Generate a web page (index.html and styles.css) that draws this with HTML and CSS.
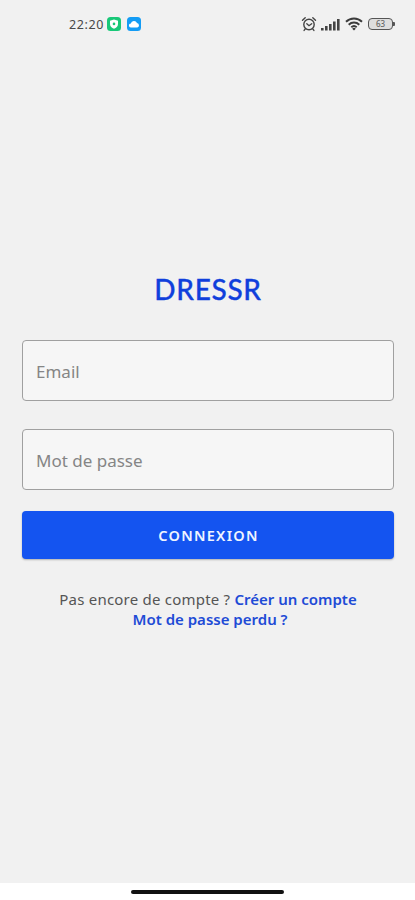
FILE: index.html
```html
<!DOCTYPE html>
<html lang="fr">
<head>
<meta charset="utf-8">
<title>Dressr</title>
<link rel="stylesheet" href="styles.css">
</head>
<body>
<div class="screen">
  <header class="status">
    <div class="status-left">
      <span class="time">22:20</span>
      <svg class="app" viewBox="0 0 14 14"><rect width="14" height="14" rx="3.5" fill="#18c878"/><path d="M7 2.500l4 1.200v3.300C11 9.500 9.200 11 7 11.800 4.800 11 3 9.500 3 7V3.700z" fill="#fff"/><circle cx="7" cy="6.900" r="1.300" fill="#18c878"/></svg>
      <svg class="app" viewBox="0 0 14 14"><rect width="14" height="14" rx="3.5" fill="#139cf5"/><path d="M4 10.500a2 2 0 0 1-.2-4 3.300 3.300 0 0 1 6.200-.5 2.300 2.300 0 0 1 .3 4.500z" fill="#fff"/></svg>
    </div>
    <div class="status-right">
      <svg class="alarm" viewBox="0 0 16 16" fill="none" stroke="#444" stroke-width="1.400" stroke-linecap="round"><circle cx="8" cy="8.500" r="5.200"/><path d="M1.500 4.300l2.700-2.500M14.500 4.300l-2.700-2.500M5.800 7.800L8 9.700l2.700-2M4.300 12.900l-1.200 1.500M11.700 12.900l1.200 1.500"/></svg>
      <svg class="signal" viewBox="0 0 19 13" fill="#444"><rect x="0" y="10" width="2.600" height="2.500"/><rect x="4" y="8" width="2.600" height="4.500"/><rect x="8" y="6" width="2.600" height="6.500"/><rect x="12" y="3.500" width="2.600" height="9"/><rect x="16" y="1" width="2.600" height="11.500"/></svg>
      <svg class="wifi" viewBox="0 0 18 14" fill="none" stroke="#3c3c3c" stroke-width="1.900"><path d="M1 4.800a11.500 11.500 0 0 1 16 0M3.700 7.700a7.600 7.600 0 0 1 10.600 0M6.300 10.300a4 4 0 0 1 5.400 0"/><path d="M7.200 11.700L9 13.600l1.800-1.900a2.600 2.600 0 0 0-3.600 0z" fill="#3c3c3c" stroke="none"/></svg>
      <div class="battery"><span>63</span></div>
    </div>
  </header>
  <main class="login">
    <h1>DRESSR</h1>
    <form>
      <input class="field" type="email" placeholder="Email" aria-label="Email">
      <input class="field" type="password" placeholder="Mot de passe" aria-label="Mot de passe">
      <button type="button">CONNEXION</button>
    </form>
    <div class="links">
      <p class="signup">Pas encore de compte ? <a>Créer un compte</a></p>
      <p class="lost"><a>Mot de passe perdu ?</a></p>
    </div>
  </main>
  <footer class="nav"><div class="handle"></div></footer>
</div>
</body>
</html>
```
FILE: styles.css
```css
* { box-sizing: border-box; }
body { margin: 0; font-family: "Noto Sans", sans-serif; background: #f1f1f1; }
.screen { width: 415px; height: 900px; display: flex; flex-direction: column; overflow: hidden; }
.status { height: 48px; padding: 0 22px 0 69px; display: flex; justify-content: space-between; align-items: center; }
.status-left, .status-right { display: flex; align-items: center; }
.time { font-size: 12.5px; line-height: 16px; color: #484848; width: 38px; letter-spacing: .6px; padding-top: 1px; }
.app { width: 14px; height: 14px; margin-right: 5.500px; }
.alarm { width: 16px; height: 16px; margin-right: 4px; }
.signal { width: 19px; height: 13px; margin-right: 5px; }
.wifi { width: 18px; height: 14px; margin-right: 5px; }
.battery { width: 25px; height: 12px; border: 1.500px solid #555; border-radius: 4px; position: relative; display: flex; align-items: center; justify-content: center; background: #dedede; font-size: 8px; line-height: 8px; font-weight: 500; color: #666; }
.battery::after { content: ""; position: absolute; right: -3px; top: 3px; width: 2px; height: 4px; background: #555; border-radius: 0 1px 1px 0; }
.login { flex: 1; padding: 221px 21px 0 22px; }
h1 { margin: 0; height: 40px; line-height: 40px; font-family: Lato, sans-serif; font-size: 28px; font-weight: 500; letter-spacing: .7px; color: #103fdc; text-align: center; -webkit-text-stroke: .3px #103fdc; }
form { padding-top: 31px; display: flex; flex-direction: column; }
.field { width: 100%; height: 61px; margin: 0 0 28px; padding: 2px 13px 0; border: 1px solid #a0a0a0; border-radius: 4px; background: #f6f6f6; font-family: inherit; font-size: 17px; color: #444; outline: none; }
.field::placeholder { color: #858585; opacity: 1; }
.field + .field { margin-bottom: 21px; }
button { height: 48px; padding: 0 0 1px 1px; border: 0; border-radius: 4px; background: #1454f0; color: #f0f4ff; font-family: inherit; font-size: 14.500px; font-weight: 600; letter-spacing: 1.300px; box-shadow: 0 1px 2px #0004; }
.links { padding-top: 30px; text-align: center; font-size: 15px; line-height: 20px; color: #555; }
.links p { margin: 0; white-space: nowrap; }
.signup { letter-spacing: .22px; }
.links a { color: #1e4bd6; font-weight: 600; letter-spacing: 0; }
.lost { padding-left: 4px; }
.nav { height: 17px; background: #fff; display: flex; justify-content: center; padding-top: 7px; }
.handle { width: 153px; height: 4px; border-radius: 2px; background: #111; }
```
